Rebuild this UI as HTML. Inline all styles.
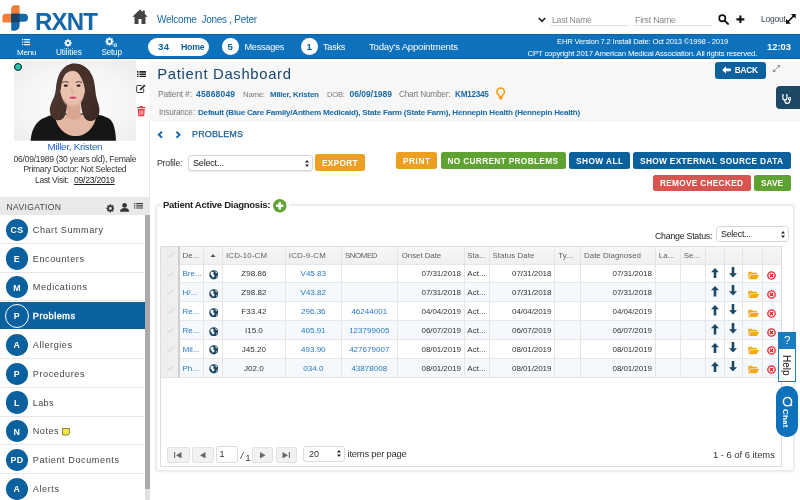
<!DOCTYPE html>
<html><head><meta charset="utf-8"><title>Patient Dashboard</title>
<style>
html,body{margin:0;padding:0;}
body{width:800px;height:500px;overflow:hidden;position:relative;background:#fff;will-change:transform;font-family:"Liberation Sans",sans-serif;}
.t{position:absolute;white-space:pre;line-height:1;}
.b{position:absolute;box-sizing:border-box;}
</style></head><body>
<div class="b" style="left:0.00px;top:34.20px;width:800.00px;height:25.00px;background:#0d71bc;border-top:1px solid #0c62a8;border-bottom:1px solid #0c62a8;"></div>
<div class="b" style="left:149.00px;top:61.50px;width:651.00px;height:59.00px;background:#f7f7f7;"></div>
<div class="b" style="left:149.00px;top:120.50px;width:1.00px;height:379.50px;background:#e6e6e6;"></div>
<div class="b" style="left:149.00px;top:120.20px;width:651.00px;height:0.80px;background:#f1f1f1;"></div>
<svg class="b" style="left:0.00px;top:0.00px;" width="32.00" height="34.00" viewBox="0 0 32 34">
<path d="M14.700 5.200h4.900v17.200h-15.700a1.500 1.500 0 0 1-1.500-1.500v-3.750a3.500 3.500 0 0 1 3.500-3.500h5.300v-4.950a3.500 3.500 0 0 1 3.500-3.500z" fill="#f57d36"/>
<path d="M11.200 13.650h12.800a4 4 0 0 1 4 4v0.200a4 4 0 0 1-4 4h-4.400v3.950a5 5 0 0 1-5 5h-2.400a1 1 0 0 1-1-1z" fill="#1467a8"/>
<rect x="11.200" y="13.650" width="8.400" height="8.750" fill="#15436b"/>
</svg>
<span class="t" style="left:35.00px;top:10.00px;font-size:24.00px;color:#1466aa;font-weight:700;letter-spacing:-0.843px;">RXNT</span>
<svg class="b" style="left:132.00px;top:9.00px;" width="16.00" height="15.50" viewBox="0 0 16 15.5"><path d="M8 0.500L0.300 7.700h2.200v7.300h4v-5h3v5h4v-7.300h2.200L12.800 5v-3.500h-2v1.600z" fill="#444"/></svg>
<span class="t" style="left:157.00px;top:15.00px;font-size:10.00px;color:#1a69a6;letter-spacing:-0.284px;">Welcome  Jones , Peter</span>
<svg class="b" style="left:537.50px;top:16.50px;" width="8.00" height="6.00" viewBox="0 0 8 6"><path d="M0.800 1l3.200 3.300L7.200 1" fill="none" stroke="#222" stroke-width="1.700"/></svg>
<span class="t" style="left:552.00px;top:16.00px;font-size:8.70px;color:#8a8a8a;letter-spacing:-0.258px;">Last Name</span>
<div class="b" style="left:550.00px;top:25.20px;width:79.00px;height:1.00px;background:#e4e4e4;"></div>
<span class="t" style="left:635.00px;top:16.00px;font-size:8.85px;color:#8a8a8a;letter-spacing:-0.252px;">First Name</span>
<div class="b" style="left:634.00px;top:25.20px;width:78.00px;height:1.00px;background:#e4e4e4;"></div>
<svg class="b" style="left:717.50px;top:14.00px;" width="11.00" height="10.50" viewBox="0 0 11 10.5"><circle cx="4.300" cy="4.300" r="3.100" fill="none" stroke="#111" stroke-width="1.700"/><path d="M6.600 6.600l3.400 3.300" stroke="#111" stroke-width="2" stroke-linecap="round"/></svg>
<svg class="b" style="left:736.30px;top:14.60px;" width="8.80" height="8.80" viewBox="0 0 10 10"><path d="M5 0.500v9M0.500 5h9" stroke="#111" stroke-width="2.400"/></svg>
<span class="t" style="left:761.00px;top:15.00px;font-size:8.55px;color:#414a5a;letter-spacing:-0.231px;">Logout</span>
<svg class="b" style="left:786.00px;top:14.30px;" width="9.70" height="9.70" viewBox="0 0 10 10"><path d="M5 0h5v5zM0 5v5h5z" fill="#111"/><path d="M8 2L2 8" stroke="#111" stroke-width="1.700"/></svg>
<svg class="b" style="left:22.00px;top:39.00px;" width="8.00" height="6.50" viewBox="0 0 8 6.500"><path d="M0 0.700h1.300M2.200 0.700h5.800M0 3.200h1.300M2.200 3.200h5.800M0 5.700h1.300M2.200 5.700h5.800" stroke="#fff" stroke-width="1.300"/></svg>
<span class="t" style="left:17.00px;top:49.00px;font-size:8.05px;color:#fff;letter-spacing:-0.211px;">Menu</span>
<svg class="b" style="left:64.00px;top:38.50px;" width="8.00" height="8.00" viewBox="0 0 16 16"><path d="M6.440 2.620L6.710 0.610L9.290 0.610L9.560 2.620L10.700 3.090L12.310 1.860L14.140 3.690L12.910 5.300L13.380 6.440L15.390 6.710L15.390 9.290L13.380 9.560L12.910 10.700L14.140 12.310L12.310 14.140L10.700 12.910L9.560 13.380L9.290 15.390L6.710 15.390L6.440 13.380L5.300 12.910L3.690 14.140L1.860 12.310L3.090 10.700L2.620 9.560L0.610 9.290L0.610 6.710L2.620 6.440L3.090 5.300L1.860 3.690L3.690 1.860L5.300 3.090ZM5.400 8a2.600 2.600 0 1 0 5.200 0a2.600 2.600 0 1 0 -5.200 0Z" fill="#fff" fill-rule="evenodd"/></svg>
<span class="t" style="left:56.00px;top:49.00px;font-size:8.20px;color:#fff;letter-spacing:-0.054px;">Utilities</span>
<svg class="b" style="left:105.00px;top:37.00px;" width="9.00" height="9.00" viewBox="0 0 16 16"><path d="M6.440 2.620L6.710 0.610L9.290 0.610L9.560 2.620L10.700 3.090L12.310 1.860L14.140 3.690L12.910 5.300L13.380 6.440L15.390 6.710L15.390 9.290L13.380 9.560L12.910 10.700L14.140 12.310L12.310 14.140L10.700 12.910L9.560 13.380L9.290 15.390L6.710 15.390L6.440 13.380L5.300 12.910L3.690 14.140L1.860 12.310L3.090 10.700L2.620 9.560L0.610 9.290L0.610 6.710L2.620 6.440L3.090 5.300L1.860 3.690L3.690 1.860L5.300 3.090ZM5.400 8a2.600 2.600 0 1 0 5.200 0a2.600 2.600 0 1 0 -5.200 0Z" fill="#fff" fill-rule="evenodd"/></svg>
<svg class="b" style="left:112.50px;top:42.50px;" width="4.50" height="4.50" viewBox="0 0 16 16"><path d="M6.440 2.620L6.710 0.610L9.290 0.610L9.560 2.620L10.700 3.090L12.310 1.860L14.140 3.690L12.910 5.300L13.380 6.440L15.390 6.710L15.390 9.290L13.380 9.560L12.910 10.700L14.140 12.310L12.310 14.140L10.700 12.910L9.560 13.380L9.290 15.390L6.710 15.390L6.440 13.380L5.300 12.910L3.690 14.140L1.860 12.310L3.090 10.700L2.620 9.560L0.610 9.290L0.610 6.710L2.620 6.440L3.090 5.300L1.860 3.690L3.690 1.860L5.300 3.090ZM5.400 8a2.600 2.600 0 1 0 5.200 0a2.600 2.600 0 1 0 -5.200 0Z" fill="#cfe2f3" fill-rule="evenodd"/></svg>
<span class="t" style="left:101.50px;top:49.00px;font-size:8.20px;color:#fff;letter-spacing:-0.232px;">Setup</span>
<div class="b" style="left:147.50px;top:37.50px;width:61.50px;height:18.00px;background:#fff;border-radius:9px;"></div>
<span class="t" style="left:158.00px;top:42.00px;font-size:9.60px;color:#0b609e;font-weight:700;letter-spacing:0.325px;">34</span>
<span class="t" style="left:181.00px;top:43.00px;font-size:8.70px;color:#0b609e;font-weight:700;letter-spacing:-0.223px;">Home</span>
<div class="b" style="left:222.00px;top:38.00px;width:16.50px;height:16.50px;background:#fff;border-radius:50%;"></div>
<span class="t" style="left:227.53px;top:42.00px;font-size:9.60px;color:#0b609e;font-weight:700;">5</span>
<span class="t" style="left:244.50px;top:43.00px;font-size:9.15px;color:#fff;letter-spacing:-0.244px;">Messages</span>
<div class="b" style="left:301.00px;top:38.00px;width:16.50px;height:16.50px;background:#fff;border-radius:50%;"></div>
<span class="t" style="left:306.53px;top:42.00px;font-size:9.60px;color:#0b609e;font-weight:700;">1</span>
<span class="t" style="left:323.00px;top:43.00px;font-size:9.20px;color:#fff;letter-spacing:-0.254px;">Tasks</span>
<span class="t" style="left:369.00px;top:42.00px;font-size:9.60px;color:#fff;letter-spacing:-0.215px;">Today's Appointments</span>
<span class="t" style="left:557.00px;top:38.00px;font-size:7.70px;color:#fff;letter-spacing:-0.210px;">EHR Version 7.2 Install Date: Oct 2013 ©1998 - 2019</span>
<span class="t" style="left:527.50px;top:50.00px;font-size:7.80px;color:#fff;letter-spacing:-0.186px;">CPT copyright 2017 American Medical Association. All rights reserved.</span>
<span class="t" style="left:767.00px;top:42.00px;font-size:9.40px;color:#fff;font-weight:700;letter-spacing:-0.011px;">12:03</span>
<span class="t" style="left:157.30px;top:67.00px;font-size:14.80px;color:#17456f;letter-spacing:0.694px;">Patient Dashboard</span>
<span class="t" style="left:158.00px;top:90.00px;font-size:8.50px;color:#7a7a7a;letter-spacing:-0.213px;">Patient #:</span>
<span class="t" style="left:196.00px;top:90.00px;font-size:8.50px;color:#1a69a6;font-weight:700;letter-spacing:0.169px;">45868049</span>
<span class="t" style="left:243.00px;top:91.00px;font-size:7.75px;color:#7a7a7a;letter-spacing:-0.206px;">Name:</span>
<span class="t" style="left:270.00px;top:91.00px;font-size:7.95px;color:#1a69a6;font-weight:700;letter-spacing:-0.224px;">Miller, Kristen</span>
<span class="t" style="left:327.00px;top:91.00px;font-size:7.60px;color:#7a7a7a;letter-spacing:-0.194px;">DOB:</span>
<span class="t" style="left:349.50px;top:90.00px;font-size:8.50px;color:#1a69a6;font-weight:700;">06/09/1989</span>
<span class="t" style="left:399.00px;top:90.00px;font-size:8.30px;color:#7a7a7a;letter-spacing:-0.244px;">Chart Number:</span>
<span class="t" style="left:455.00px;top:91.00px;font-size:8.15px;color:#1a69a6;font-weight:700;letter-spacing:-0.223px;">KM12345</span>
<svg class="b" style="left:496.00px;top:87.20px;" width="9.40" height="12.70" viewBox="0 0 9.400 12.700"><path d="M4.700 0.900a3.800 3.800 0 0 0-2.300 6.800c0.500 0.500 0.800 1.100 0.900 1.800h2.800c0.100-0.700 0.400-1.300 0.900-1.800a3.800 3.800 0 0 0-2.300-6.800z" fill="none" stroke="#fb9b14" stroke-width="1.500"/><path d="M3.100 9.300h3.200v1.900a1.200 1.200 0 0 1-1.200 1.200h-0.800a1.200 1.200 0 0 1-1.200-1.200z" fill="#fb9b14"/></svg>
<span class="t" style="left:159.00px;top:109.00px;font-size:8.15px;color:#7a7a7a;letter-spacing:-0.228px;">Insurance:</span>
<span class="t" style="left:198.00px;top:109.00px;font-size:8.10px;color:#1a69a6;font-weight:700;letter-spacing:-0.232px;">Default (Blue Care Family/Anthem Medicaid), State Farm (State Farm), Hennepin Health (Hennepin Health)</span>
<div class="b" style="left:715.00px;top:62.00px;width:50.60px;height:16.80px;background:#0b609e;border-radius:3px;"></div>
<svg class="b" style="left:722.00px;top:66.40px;" width="9.00" height="7.80" viewBox="0 0 9 8"><path d="M0 4l4-3.800v2.400h5v2.800h-5v2.400z" fill="#fff"/></svg>
<span class="t" style="left:734.80px;top:66.00px;font-size:8.30px;color:#fff;font-weight:700;letter-spacing:-0.226px;">BACK</span>
<svg class="b" style="left:773.00px;top:64.50px;" width="7.00" height="7.00" viewBox="0 0 7 7"><path d="M4 0h3v3zM3 7h-3v-3z" fill="#8e8e8e"/><path d="M6 1l-5 5" stroke="#8e8e8e" stroke-width="1"/></svg>
<div class="b" style="left:776.00px;top:86.00px;width:28.00px;height:23.00px;background:#1c4865;border-radius:4px;"></div>
<svg class="b" style="left:781.70px;top:93.60px;" width="9.60" height="10.20" viewBox="0 0 12 13"><path d="M2.200 1.200h-1.200v3.800a2.600 2.600 0 0 0 5.200 0v-3.800h-1.200" fill="none" stroke="#fff" stroke-width="1.500"/><path d="M3.600 7.600v1.400a3 3 0 0 0 6 0v-1.600" fill="none" stroke="#fff" stroke-width="1.500"/><circle cx="9.600" cy="6" r="1.500" fill="none" stroke="#fff" stroke-width="1.400"/></svg>
<svg class="b" style="left:136.80px;top:70.80px;" width="9.50" height="6.50" viewBox="0 0 9.500 6.500"><path d="M0 0.900h1.500M2.400 0.900h7.100M0 3.250h1.500M2.400 3.250h7.100M0 5.600h1.500M2.400 5.600h7.100" stroke="#222" stroke-width="1.600"/></svg>
<svg class="b" style="left:136.30px;top:84.20px;" width="10.00" height="9.00" viewBox="0 0 10 9"><path d="M5.500 1.500h-4a0.800 0.800 0 0 0-0.800 0.800v5.400a0.800 0.800 0 0 0 0.800 0.800h5.400a0.800 0.800 0 0 0 0.800-0.800v-3" fill="none" stroke="#333" stroke-width="1"/><path d="M3.500 6.500l0.400-1.800 4.300-4.300 1.400 1.400-4.300 4.300z" fill="#333"/></svg>
<svg class="b" style="left:137.20px;top:106.40px;" width="8.50" height="10.30" viewBox="0 0 8.500 10.500"><path d="M3 0h2.500l0.400 1h2.600v1.300h-8.500v-1.300h2.600zM0.700 3h7.100l-0.500 7a0.600 0.600 0 0 1-0.600 0.500h-4.900a0.600 0.600 0 0 1-0.600-0.500z" fill="#fa3341"/><path d="M2.700 4.500v4.500M4.250 4.500v4.500M5.800 4.500v4.500" stroke="#fff" stroke-width="0.700"/></svg>
<span class="t" style="left:47.50px;top:142.00px;font-size:9.85px;color:#1d5fd0;letter-spacing:-0.287px;">Miller, Kristen</span>
<span class="t" style="left:13.50px;top:155.00px;font-size:8.55px;color:#333;letter-spacing:-0.241px;">06/09/1989 (30 years old), Female</span>
<span class="t" style="left:23.40px;top:165.00px;font-size:8.50px;color:#333;letter-spacing:-0.254px;">Primary Doctor: Not Selected</span>
<span class="t" style="left:35.00px;top:176.00px;font-size:8.45px;color:#333;letter-spacing:-0.248px;">Last Visit:</span>
<span class="t" style="left:74.00px;top:176.00px;font-size:8.65px;color:#222;letter-spacing:-0.255px;text-decoration:underline;">09/23/2019</span>
<div class="b" style="left:0.00px;top:197.40px;width:149.50px;height:18.00px;background:#e9e9e9;"></div>
<span class="t" style="left:6.60px;top:203.00px;font-size:8.60px;color:#444;letter-spacing:0.293px;">NAVIGATION</span>
<svg class="b" style="left:105.50px;top:203.90px;" width="8.80" height="8.80" viewBox="0 0 16 16"><path d="M6.440 2.620L6.710 0.610L9.290 0.610L9.560 2.620L10.700 3.090L12.310 1.860L14.140 3.690L12.910 5.300L13.380 6.440L15.390 6.710L15.390 9.290L13.380 9.560L12.910 10.700L14.140 12.310L12.310 14.140L10.700 12.910L9.560 13.380L9.290 15.390L6.710 15.390L6.440 13.380L5.300 12.910L3.690 14.140L1.860 12.310L3.090 10.700L2.620 9.560L0.610 9.290L0.610 6.710L2.620 6.440L3.090 5.300L1.860 3.690L3.690 1.860L5.300 3.090ZM5.400 8a2.600 2.600 0 1 0 5.200 0a2.600 2.600 0 1 0 -5.200 0Z" fill="#333" fill-rule="evenodd"/></svg>
<svg class="b" style="left:119.80px;top:203.20px;" width="9.20" height="8.70" viewBox="0 0 9 8.500"><circle cx="4.500" cy="2.400" r="2.300" fill="#333"/><path d="M0 8.500c0-2.500 1.800-3.600 4.500-3.600s4.500 1.100 4.500 3.600z" fill="#333"/></svg>
<svg class="b" style="left:134.20px;top:203.40px;" width="9.00" height="6.00" viewBox="0 0 9 6"><path d="M0 0.600h1.300M2.200 0.600h6.800M0 2.800h1.300M2.200 2.800h6.800M0 5h1.300M2.200 5h6.800" stroke="#3a3a3a" stroke-width="1.150"/></svg>
<div class="b" style="left:145.20px;top:215.40px;width:4.40px;height:273.60px;background:#ababab;"></div>
<div class="b" style="left:145.20px;top:489.00px;width:4.40px;height:11.00px;background:#e0e0e0;"></div>
<div class="b" style="left:0.00px;top:242.75px;width:144.00px;height:1.00px;background:#e6e6e6;"></div>
<div class="b" style="left:5.50px;top:218.65px;width:22.60px;height:22.20px;background:#0b609e;border-radius:50%;"></div>
<span class="t" style="left:10.69px;top:226.00px;font-size:8.80px;color:#fff;font-weight:700;letter-spacing:0.600px;margin-left:-0.3px;">CS</span>
<span class="t" style="left:32.80px;top:226.00px;font-size:9.10px;color:#444;letter-spacing:0.540px;">Chart Summary</span>
<div class="b" style="left:0.00px;top:271.55px;width:144.00px;height:1.00px;background:#e6e6e6;"></div>
<div class="b" style="left:5.50px;top:247.45px;width:22.60px;height:22.20px;background:#0b609e;border-radius:50%;"></div>
<span class="t" style="left:13.87px;top:255.00px;font-size:8.80px;color:#fff;font-weight:700;letter-spacing:0.600px;margin-left:-0.0px;">E</span>
<span class="t" style="left:32.80px;top:255.00px;font-size:9.10px;color:#444;letter-spacing:0.574px;">Encounters</span>
<div class="b" style="left:0.00px;top:300.35px;width:144.00px;height:1.00px;background:#e6e6e6;"></div>
<div class="b" style="left:5.50px;top:276.25px;width:22.60px;height:22.20px;background:#0b609e;border-radius:50%;"></div>
<span class="t" style="left:13.13px;top:284.00px;font-size:8.80px;color:#fff;font-weight:700;letter-spacing:0.600px;margin-left:-0.0px;">M</span>
<span class="t" style="left:32.80px;top:283.00px;font-size:9.10px;color:#444;letter-spacing:0.564px;">Medications</span>
<div class="b" style="left:0.00px;top:301.65px;width:145.20px;height:27.70px;background:#0b609e;"></div>
<div class="b" style="left:4.80px;top:304.15px;width:24.00px;height:24.00px;background:transparent;border-radius:50%;border:1.600px solid #fff;"></div>
<span class="t" style="left:13.87px;top:312.00px;font-size:8.80px;color:#fff;font-weight:700;letter-spacing:0.600px;margin-left:-0.0px;">P</span>
<span class="t" style="left:32.80px;top:312.00px;font-size:9.10px;color:#fff;letter-spacing:0.537px;-webkit-text-stroke:0.400px #fff;">Problems</span>
<div class="b" style="left:0.00px;top:357.95px;width:144.00px;height:1.00px;background:#e6e6e6;"></div>
<div class="b" style="left:5.50px;top:333.85px;width:22.60px;height:22.20px;background:#0b609e;border-radius:50%;"></div>
<span class="t" style="left:13.62px;top:341.00px;font-size:8.80px;color:#fff;font-weight:700;letter-spacing:0.600px;margin-left:-0.0px;">A</span>
<span class="t" style="left:32.80px;top:341.00px;font-size:9.10px;color:#444;letter-spacing:0.538px;">Allergies</span>
<div class="b" style="left:0.00px;top:386.75px;width:144.00px;height:1.00px;background:#e6e6e6;"></div>
<div class="b" style="left:5.50px;top:362.65px;width:22.60px;height:22.20px;background:#0b609e;border-radius:50%;"></div>
<span class="t" style="left:13.87px;top:370.00px;font-size:8.80px;color:#fff;font-weight:700;letter-spacing:0.600px;margin-left:-0.0px;">P</span>
<span class="t" style="left:32.80px;top:370.00px;font-size:9.10px;color:#444;letter-spacing:0.574px;">Procedures</span>
<div class="b" style="left:0.00px;top:415.55px;width:144.00px;height:1.00px;background:#e6e6e6;"></div>
<div class="b" style="left:5.50px;top:391.45px;width:22.60px;height:22.20px;background:#0b609e;border-radius:50%;"></div>
<span class="t" style="left:14.11px;top:399.00px;font-size:8.80px;color:#fff;font-weight:700;letter-spacing:0.600px;margin-left:-0.0px;">L</span>
<span class="t" style="left:32.80px;top:399.00px;font-size:9.10px;color:#444;letter-spacing:0.324px;">Labs</span>
<div class="b" style="left:0.00px;top:444.35px;width:144.00px;height:1.00px;background:#e6e6e6;"></div>
<div class="b" style="left:5.50px;top:420.25px;width:22.60px;height:22.20px;background:#0b609e;border-radius:50%;"></div>
<span class="t" style="left:13.62px;top:428.00px;font-size:8.80px;color:#fff;font-weight:700;letter-spacing:0.600px;margin-left:-0.0px;">N</span>
<span class="t" style="left:32.80px;top:427.00px;font-size:9.10px;color:#444;letter-spacing:0.483px;">Notes</span>
<div class="b" style="left:0.00px;top:473.15px;width:144.00px;height:1.00px;background:#e6e6e6;"></div>
<div class="b" style="left:5.50px;top:449.05px;width:22.60px;height:22.20px;background:#0b609e;border-radius:50%;"></div>
<span class="t" style="left:10.69px;top:456.00px;font-size:8.80px;color:#fff;font-weight:700;letter-spacing:0.600px;margin-left:-0.3px;">PD</span>
<span class="t" style="left:32.80px;top:456.00px;font-size:9.10px;color:#444;letter-spacing:0.582px;">Patient Documents</span>
<div class="b" style="left:0.00px;top:501.95px;width:144.00px;height:1.00px;background:#e6e6e6;"></div>
<div class="b" style="left:5.50px;top:477.85px;width:22.60px;height:22.20px;background:#0b609e;border-radius:50%;"></div>
<span class="t" style="left:13.62px;top:485.00px;font-size:8.80px;color:#fff;font-weight:700;letter-spacing:0.600px;margin-left:-0.0px;">A</span>
<span class="t" style="left:32.80px;top:485.00px;font-size:9.10px;color:#444;letter-spacing:0.588px;">Alerts</span>
<svg class="b" style="left:62.40px;top:428.00px;" width="8.10" height="7.50" viewBox="0 0 8 7.500"><path d="M0.500 0.500h7v5l-1.500 1.500h-5.500z" fill="#f3e645" stroke="#6b6b2a" stroke-width="0.800"/></svg>
<svg class="b" style="left:13.70px;top:59.50px;" width="122.00" height="81.10" viewBox="22 10 718 473">
<defs>
<radialGradient id="pbg" cx="0.5" cy="0.55" r="0.75"><stop offset="0" stop-color="#fcfcfc"/><stop offset="0.6" stop-color="#f5f5f5"/><stop offset="1" stop-color="#eaeaea"/></radialGradient>
<linearGradient id="hair" x1="0" y1="0" x2="1" y2="1"><stop offset="0" stop-color="#5a4238"/><stop offset="0.5" stop-color="#46322b"/><stop offset="1" stop-color="#3a2923"/></linearGradient>
<clipPath id="hclip"><path d="M375 28C335 30 298 60 282 110C268 150 272 190 258 225L336 250L414 250L506 222C498 180 500 140 482 100C462 55 420 28 375 28Z"/></clipPath>
<filter id="soft" x="-5%" y="-5%" width="110%" height="110%"><feGaussianBlur stdDeviation="2.500"/></filter>
</defs>
<rect x="22" y="10" width="718" height="473" fill="url(#pbg)"/>
<g filter="url(#soft)">
<path d="M120 483C124 430 140 385 185 355C215 338 250 328 290 322L480 322C520 328 560 338 585 355C612 378 620 430 622 483Z" fill="#131313"/>
<path d="M262 328C268 400 320 455 385 455C450 455 500 400 508 328Z" fill="#e3b7a2"/>
<path d="M332 250h82v95c-20 18-62 18-82 0z" fill="#d9a690"/>
<path d="M375 28C335 30 298 60 282 110C268 150 272 190 258 225C240 262 226 290 236 325C246 355 280 372 305 356C325 342 332 310 336 250L414 250C420 320 432 350 455 364C485 376 518 352 524 318C530 282 512 255 506 222C498 180 500 140 482 100C462 55 420 28 375 28Z" fill="url(#hair)"/>
<ellipse cx="367" cy="174" rx="73" ry="102" fill="#eac3b0"/>
<g clip-path="url(#hclip)"><path d="M353 52C322 78 302 122 297 185L270 190L270 20L353 20Z" fill="#4a362e"/>
<path d="M353 52C400 66 430 118 441 190L470 195L470 20L353 20Z" fill="#46322b"/></g>
<path d="M300 215q66 80 134 0q-10 70-67 72q-55-2-67-72z" fill="#e2b5a1" opacity="0.6"/>
<ellipse cx="327" cy="159" rx="12" ry="6.500" fill="#2e211d"/>
<ellipse cx="402" cy="159" rx="12" ry="6.500" fill="#2e211d"/>
<path d="M306 140q20-10 38 0M384 140q20-10 38 0" stroke="#4a352d" stroke-width="5.500" fill="none"/>
<path d="M364 170q-4 22 0 30h12" stroke="#c99482" stroke-width="4" fill="none"/>
<path d="M345 228q24-10 48 0q-24 18-48 0z" fill="#d4466e"/>
</g>
</svg>
<div class="b" style="left:14.10px;top:62.70px;width:8.00px;height:8.00px;background:#27c4ae;border-radius:50%;border:1.500px solid #10191a;box-shadow:0 0 0 0.800px rgba(255,255,255,0.85);"></div>
<svg class="b" style="left:157.00px;top:130.50px;" width="6.50" height="7.50" viewBox="0 0 6.500 7.500"><path d="M5 0.800L1.800 3.750L5 6.700" fill="none" stroke="#1466aa" stroke-width="1.900"/></svg>
<svg class="b" style="left:174.50px;top:130.50px;" width="6.50" height="7.50" viewBox="0 0 6.500 7.500"><path d="M1.500 0.800L4.700 3.750L1.500 6.700" fill="none" stroke="#1466aa" stroke-width="1.900"/></svg>
<span class="t" style="left:192.00px;top:130.00px;font-size:9.00px;color:#1a5f96;letter-spacing:0.141px;-webkit-text-stroke:0.250px #1a5f96;">PROBLEMS</span>
<span class="t" style="left:157.00px;top:159.00px;font-size:8.75px;color:#333;letter-spacing:-0.247px;">Profile:</span>
<div class="b" style="left:187.50px;top:154.50px;width:125.00px;height:16.50px;background:#fff;border:1px solid #d4d4d4;border-radius:3.500px;box-shadow:0 0.5px 1px rgba(0,0,0,0.08);"></div>
<span class="t" style="left:193.00px;top:159.00px;font-size:9.15px;color:#222;letter-spacing:-0.257px;">Select...</span>
<svg class="b" style="left:305.00px;top:159.50px;" width="4.00" height="7.00" viewBox="0 0 4 7"><path d="M0 2.600L2 0L4 2.600zM0 4.400L2 7L4 4.400z" fill="#222"/></svg>
<div class="b" style="left:315.00px;top:154.00px;width:50.00px;height:17.00px;background:#ec9f20;border-radius:2.500px;"></div>
<span class="t" style="left:322.00px;top:159.00px;font-size:8.30px;color:#fff;font-weight:700;letter-spacing:0.274px;">EXPORT</span>
<div class="b" style="left:396.00px;top:152.00px;width:41.00px;height:16.50px;background:#ec9f20;border-radius:2.500px;"></div>
<span class="t" style="left:403.00px;top:157.00px;font-size:8.30px;color:#fff;font-weight:700;letter-spacing:0.525px;">PRINT</span>
<div class="b" style="left:440.50px;top:152.00px;width:125.00px;height:16.50px;background:#5ea331;border-radius:2.500px;"></div>
<span class="t" style="left:447.50px;top:157.00px;font-size:8.30px;color:#fff;font-weight:700;letter-spacing:0.324px;">NO CURRENT PROBLEMS</span>
<div class="b" style="left:569.00px;top:152.00px;width:61.00px;height:16.50px;background:#0b609e;border-radius:2.500px;"></div>
<span class="t" style="left:576.00px;top:157.00px;font-size:8.30px;color:#fff;font-weight:700;letter-spacing:0.436px;">SHOW ALL</span>
<div class="b" style="left:633.00px;top:152.00px;width:157.50px;height:16.50px;background:#0b609e;border-radius:2.500px;"></div>
<span class="t" style="left:640.00px;top:157.00px;font-size:8.30px;color:#fff;font-weight:700;letter-spacing:0.348px;">SHOW EXTERNAL SOURCE DATA</span>
<div class="b" style="left:653.00px;top:174.50px;width:97.50px;height:16.50px;background:#d9534f;border-radius:2.500px;"></div>
<span class="t" style="left:660.00px;top:179.00px;font-size:8.30px;color:#fff;font-weight:700;letter-spacing:0.283px;">REMOVE CHECKED</span>
<div class="b" style="left:754.00px;top:174.50px;width:36.50px;height:16.50px;background:#5ea331;border-radius:2.500px;"></div>
<span class="t" style="left:761.00px;top:179.00px;font-size:8.30px;color:#fff;font-weight:700;">SAVE</span>
<div class="b" style="left:156.00px;top:204.50px;width:637.50px;height:266.00px;background:#fff;border:1px solid #e9e9e9;border-radius:2px;box-shadow:0 0 3px rgba(0,0,0,0.16);"></div>
<div class="b" style="left:160.00px;top:198.00px;width:129.00px;height:16.00px;background:#fff;"></div>
<span class="t" style="left:163.00px;top:200.00px;font-size:9.55px;color:#222;font-weight:700;letter-spacing:-0.282px;">Patient Active Diagnosis:</span>
<svg class="b" style="left:273.00px;top:199.00px;" width="13.50" height="13.50" viewBox="0 0 13.500 13.500"><circle cx="6.750" cy="6.750" r="6.750" fill="#5ea331"/><path d="M6.750 3v7.500M3 6.750h7.500" stroke="#fff" stroke-width="2.400"/></svg>
<span class="t" style="left:655.00px;top:232.00px;font-size:8.80px;color:#222;letter-spacing:-0.244px;">Change Status:</span>
<div class="b" style="left:715.50px;top:226.00px;width:73.50px;height:15.50px;background:#fff;border:1px solid #d4d4d4;border-radius:3.500px;"></div>
<span class="t" style="left:721.00px;top:230.00px;font-size:8.85px;color:#222;letter-spacing:-0.247px;">Select...</span>
<svg class="b" style="left:781.00px;top:230.50px;" width="4.00" height="7.00" viewBox="0 0 4 7"><path d="M0 2.600L2 0L4 2.600zM0 4.400L2 7L4 4.400z" fill="#222"/></svg>
<div class="b" style="left:159.80px;top:246.00px;width:622.50px;height:220.50px;background:#fff;border:1px solid #dcdcdc;"></div>
<div class="b" style="left:160.80px;top:247.00px;width:620.50px;height:17.00px;background:linear-gradient(#f7f7f7,#f0f0f0);"></div>
<div class="b" style="left:160.80px;top:263.50px;width:620.50px;height:1.00px;background:#e7e7e7;"></div>
<div class="b" style="left:160.80px;top:282.85px;width:620.50px;height:18.85px;background:#f5f8fc;"></div>
<div class="b" style="left:160.80px;top:282.35px;width:620.50px;height:1.00px;background:#e7e7e7;"></div>
<div class="b" style="left:160.80px;top:301.20px;width:620.50px;height:1.00px;background:#e7e7e7;"></div>
<div class="b" style="left:160.80px;top:320.55px;width:620.50px;height:18.85px;background:#f5f8fc;"></div>
<div class="b" style="left:160.80px;top:320.05px;width:620.50px;height:1.00px;background:#e7e7e7;"></div>
<div class="b" style="left:160.80px;top:338.90px;width:620.50px;height:1.00px;background:#e7e7e7;"></div>
<div class="b" style="left:160.80px;top:358.25px;width:620.50px;height:18.85px;background:#f5f8fc;"></div>
<div class="b" style="left:160.80px;top:357.75px;width:620.50px;height:1.00px;background:#e7e7e7;"></div>
<div class="b" style="left:160.80px;top:376.60px;width:620.50px;height:1.00px;background:#e4e4e4;"></div>
<div class="b" style="left:160.80px;top:247.00px;width:17.70px;height:130.10px;background:#efefef;"></div>
<div class="b" style="left:178.10px;top:247.00px;width:1.80px;height:130.10px;background:#d0d0d0;"></div>
<div class="b" style="left:203.25px;top:247.00px;width:1.00px;height:130.10px;background:#e5e5e5;"></div>
<div class="b" style="left:222.00px;top:247.00px;width:1.00px;height:130.10px;background:#e5e5e5;"></div>
<div class="b" style="left:284.50px;top:247.00px;width:1.00px;height:130.10px;background:#e5e5e5;"></div>
<div class="b" style="left:340.50px;top:247.00px;width:1.00px;height:130.10px;background:#e5e5e5;"></div>
<div class="b" style="left:397.00px;top:247.00px;width:1.00px;height:130.10px;background:#e5e5e5;"></div>
<div class="b" style="left:463.50px;top:247.00px;width:1.00px;height:130.10px;background:#e5e5e5;"></div>
<div class="b" style="left:488.50px;top:247.00px;width:1.00px;height:130.10px;background:#e5e5e5;"></div>
<div class="b" style="left:554.00px;top:247.00px;width:1.00px;height:130.10px;background:#e5e5e5;"></div>
<div class="b" style="left:580.00px;top:247.00px;width:1.00px;height:130.10px;background:#e5e5e5;"></div>
<div class="b" style="left:655.00px;top:247.00px;width:1.00px;height:130.10px;background:#e5e5e5;"></div>
<div class="b" style="left:680.00px;top:247.00px;width:1.00px;height:130.10px;background:#e5e5e5;"></div>
<div class="b" style="left:705.00px;top:247.00px;width:1.00px;height:130.10px;background:#e5e5e5;"></div>
<div class="b" style="left:723.50px;top:247.00px;width:1.00px;height:130.10px;background:#e5e5e5;"></div>
<div class="b" style="left:742.00px;top:247.00px;width:1.00px;height:130.10px;background:#e5e5e5;"></div>
<div class="b" style="left:761.50px;top:247.00px;width:1.00px;height:130.10px;background:#e5e5e5;"></div>
<span class="t" style="left:182.50px;top:252.00px;font-size:7.90px;color:#5e5e5e;">De</span>
<span class="t" style="left:192.70px;top:252.00px;font-size:7.90px;color:#5e5e5e;">...</span>
<svg class="b" style="left:209.50px;top:253.50px;" width="6.00" height="3.50" viewBox="0 0 6 3.500"><path d="M0 3.500L3 0L6 3.500z" fill="#555"/></svg>
<span class="t" style="left:226.00px;top:252.00px;font-size:7.90px;color:#5e5e5e;letter-spacing:0.132px;">ICD-10-CM</span>
<span class="t" style="left:288.80px;top:252.00px;font-size:7.90px;color:#5e5e5e;letter-spacing:0.207px;">ICD-9-CM</span>
<span class="t" style="left:345.00px;top:252.00px;font-size:7.90px;color:#5e5e5e;letter-spacing:-0.435px;">SNOMED</span>
<span class="t" style="left:401.70px;top:252.00px;font-size:7.90px;color:#5e5e5e;letter-spacing:-0.040px;">Onset Date</span>
<span class="t" style="left:467.30px;top:252.00px;font-size:7.90px;color:#5e5e5e;">Sta</span>
<span class="t" style="left:479.26px;top:252.00px;font-size:7.90px;color:#5e5e5e;">...</span>
<span class="t" style="left:492.50px;top:252.00px;font-size:7.90px;color:#5e5e5e;letter-spacing:0.072px;">Status Date</span>
<span class="t" style="left:558.30px;top:252.00px;font-size:7.90px;color:#5e5e5e;">Ty</span>
<span class="t" style="left:566.74px;top:252.00px;font-size:7.90px;color:#5e5e5e;">...</span>
<span class="t" style="left:584.00px;top:252.00px;font-size:7.90px;color:#5e5e5e;letter-spacing:0.027px;">Date Diagnosed</span>
<span class="t" style="left:658.80px;top:252.00px;font-size:7.90px;color:#5e5e5e;">La</span>
<span class="t" style="left:667.69px;top:252.00px;font-size:7.90px;color:#5e5e5e;">...</span>
<span class="t" style="left:683.80px;top:252.00px;font-size:7.90px;color:#5e5e5e;">Se</span>
<span class="t" style="left:693.56px;top:252.00px;font-size:7.90px;color:#5e5e5e;">...</span>
<svg class="b" style="left:167.00px;top:252.00px;" width="7.00" height="6.50" viewBox="0 0 7 6.500"><path d="M0.500 3.200l2 2L6.500 0.800" fill="none" stroke="#dcdcdc" stroke-width="1.300"/></svg>
<svg class="b" style="left:167.00px;top:270.50px;" width="7.00" height="6.50" viewBox="0 0 7 6.500"><path d="M0.500 3.200l2 2L6.500 0.800" fill="none" stroke="#dcdcdc" stroke-width="1.300"/></svg>
<span class="t" style="left:182.50px;top:270.00px;font-size:8.05px;color:#2a7bc4;">Bre</span>
<span class="t" style="left:195.13px;top:270.00px;font-size:8.05px;color:#2a7bc4;">...</span>
<svg class="b" style="left:208.70px;top:270.00px;" width="9.60" height="9.60" viewBox="0 0 10 10"><circle cx="5" cy="5" r="4.800" fill="#1c4865"/><path d="M2.200 2.200c1-0.600 2.200-0.300 2.600 0.400c0.300 0.700-0.500 1.200-0.300 1.900c0.200 0.700 1.300 0.800 1.200 1.700c-0.100 0.900-1 1.600-1.700 1.500c-0.600-0.100-0.400-1-0.900-1.500c-0.500-0.500-1.300-0.600-1.500-1.400c-0.200-0.800 0.100-1.800 0.600-2.600zM6.500 1.300c0.900 0.300 1.700 0.900 2.200 1.800c-0.600 0.300-1.400 0.200-1.800-0.400c-0.300-0.500-0.500-0.900-0.400-1.400zM8.800 5.800c0.200 0.600-0.200 1.600-0.800 2.200c-0.400-0.400-0.400-1.100-0.100-1.600c0.200-0.400 0.600-0.600 0.900-0.600z" fill="#fff"/></svg>
<span class="t" style="left:241.37px;top:270.00px;font-size:8.05px;color:#333;">Z98.86</span>
<span class="t" style="left:300.54px;top:270.00px;font-size:8.05px;color:#2a7bc4;">V45.83</span>
<span class="t" style="left:421.50px;top:270.00px;font-size:8.05px;color:#333;letter-spacing:-0.088px;">07/31/2018</span>
<span class="t" style="left:467.30px;top:270.00px;font-size:8.05px;color:#333;">Act</span>
<span class="t" style="left:479.03px;top:270.00px;font-size:8.05px;color:#333;">...</span>
<span class="t" style="left:512.00px;top:270.00px;font-size:8.05px;color:#333;letter-spacing:-0.088px;">07/31/2018</span>
<span class="t" style="left:612.50px;top:270.00px;font-size:8.05px;color:#333;letter-spacing:-0.088px;">07/31/2018</span>
<svg class="b" style="left:711.00px;top:267.50px;" width="8.00" height="10.50" viewBox="0 0 8 10.500"><path d="M4 0L0 4.300h2.700v6.200h2.600v-6.200h2.700z" fill="#1c4865"/></svg>
<svg class="b" style="left:729.00px;top:266.50px;" width="8.00" height="10.50" viewBox="0 0 8 10.500"><path d="M4 10.500L0 6.200h2.700v-6.200h2.600v6.200h2.700z" fill="#1c4865"/></svg>
<svg class="b" style="left:747.50px;top:271.00px;" width="11.50" height="8.50" viewBox="0 0 11.500 8.500"><path d="M0.300 7.800v-6.600a0.500 0.500 0 0 1 0.500-0.500h2.700l1 1.100h4a0.500 0.500 0 0 1 0.500 0.500v0.900h-6.300a0.800 0.800 0 0 0-0.700 0.500z" fill="#f2a91e"/><path d="M0.600 8.300l2.100-4.300a0.500 0.500 0 0 1 0.500-0.300h8l-2.200 4.300a0.500 0.500 0 0 1-0.500 0.300z" fill="#f2a91e"/></svg>
<svg class="b" style="left:767.00px;top:271.00px;" width="9.00" height="9.00" viewBox="0 0 9 9"><circle cx="4.500" cy="4.500" r="3.700" fill="none" stroke="#e8232c" stroke-width="1.300"/><path d="M3 3l3 3M6 3l-3 3" stroke="#e8232c" stroke-width="1.500"/></svg>
<svg class="b" style="left:167.00px;top:289.35px;" width="7.00" height="6.50" viewBox="0 0 7 6.500"><path d="M0.500 3.200l2 2L6.500 0.800" fill="none" stroke="#dcdcdc" stroke-width="1.300"/></svg>
<span class="t" style="left:182.50px;top:289.00px;font-size:8.05px;color:#2a7bc4;">H/</span>
<span class="t" style="left:190.65px;top:289.00px;font-size:8.05px;color:#2a7bc4;">...</span>
<svg class="b" style="left:208.70px;top:288.85px;" width="9.60" height="9.60" viewBox="0 0 10 10"><circle cx="5" cy="5" r="4.800" fill="#1c4865"/><path d="M2.200 2.200c1-0.600 2.200-0.300 2.600 0.400c0.300 0.700-0.500 1.200-0.300 1.900c0.200 0.700 1.300 0.800 1.200 1.700c-0.100 0.900-1 1.600-1.700 1.500c-0.600-0.100-0.400-1-0.900-1.500c-0.500-0.500-1.300-0.600-1.500-1.400c-0.200-0.800 0.100-1.800 0.600-2.600zM6.500 1.300c0.900 0.300 1.700 0.900 2.200 1.800c-0.600 0.300-1.400 0.200-1.800-0.400c-0.300-0.500-0.500-0.900-0.400-1.400zM8.800 5.800c0.200 0.600-0.200 1.600-0.800 2.200c-0.400-0.400-0.400-1.100-0.100-1.600c0.200-0.400 0.600-0.600 0.900-0.600z" fill="#fff"/></svg>
<span class="t" style="left:241.37px;top:289.00px;font-size:8.05px;color:#333;">Z98.82</span>
<span class="t" style="left:300.54px;top:289.00px;font-size:8.05px;color:#2a7bc4;">V43.82</span>
<span class="t" style="left:421.50px;top:289.00px;font-size:8.05px;color:#333;letter-spacing:-0.088px;">07/31/2018</span>
<span class="t" style="left:467.30px;top:289.00px;font-size:8.05px;color:#333;">Act</span>
<span class="t" style="left:479.03px;top:289.00px;font-size:8.05px;color:#333;">...</span>
<span class="t" style="left:512.00px;top:289.00px;font-size:8.05px;color:#333;letter-spacing:-0.088px;">07/31/2018</span>
<span class="t" style="left:612.50px;top:289.00px;font-size:8.05px;color:#333;letter-spacing:-0.088px;">07/31/2018</span>
<svg class="b" style="left:711.00px;top:286.35px;" width="8.00" height="10.50" viewBox="0 0 8 10.500"><path d="M4 0L0 4.300h2.700v6.200h2.600v-6.200h2.700z" fill="#1c4865"/></svg>
<svg class="b" style="left:729.00px;top:285.35px;" width="8.00" height="10.50" viewBox="0 0 8 10.500"><path d="M4 10.500L0 6.200h2.700v-6.200h2.600v6.200h2.700z" fill="#1c4865"/></svg>
<svg class="b" style="left:747.50px;top:289.85px;" width="11.50" height="8.50" viewBox="0 0 11.500 8.500"><path d="M0.300 7.800v-6.600a0.500 0.500 0 0 1 0.500-0.500h2.700l1 1.100h4a0.500 0.500 0 0 1 0.500 0.500v0.900h-6.300a0.800 0.800 0 0 0-0.700 0.500z" fill="#f2a91e"/><path d="M0.600 8.300l2.100-4.300a0.500 0.500 0 0 1 0.500-0.300h8l-2.200 4.300a0.500 0.500 0 0 1-0.500 0.300z" fill="#f2a91e"/></svg>
<svg class="b" style="left:767.00px;top:289.85px;" width="9.00" height="9.00" viewBox="0 0 9 9"><circle cx="4.500" cy="4.500" r="3.700" fill="none" stroke="#e8232c" stroke-width="1.300"/><path d="M3 3l3 3M6 3l-3 3" stroke="#e8232c" stroke-width="1.500"/></svg>
<svg class="b" style="left:167.00px;top:308.20px;" width="7.00" height="6.50" viewBox="0 0 7 6.500"><path d="M0.500 3.200l2 2L6.500 0.800" fill="none" stroke="#dcdcdc" stroke-width="1.300"/></svg>
<span class="t" style="left:182.50px;top:308.00px;font-size:8.05px;color:#2a7bc4;">Re</span>
<span class="t" style="left:192.89px;top:308.00px;font-size:8.05px;color:#2a7bc4;">...</span>
<svg class="b" style="left:208.70px;top:307.70px;" width="9.60" height="9.60" viewBox="0 0 10 10"><circle cx="5" cy="5" r="4.800" fill="#1c4865"/><path d="M2.200 2.200c1-0.600 2.200-0.300 2.600 0.400c0.300 0.700-0.500 1.200-0.300 1.900c0.200 0.700 1.300 0.800 1.200 1.700c-0.100 0.900-1 1.600-1.700 1.500c-0.600-0.100-0.400-1-0.900-1.500c-0.500-0.500-1.300-0.600-1.500-1.400c-0.200-0.800 0.100-1.800 0.600-2.600zM6.500 1.300c0.900 0.300 1.700 0.900 2.200 1.800c-0.600 0.300-1.400 0.200-1.800-0.400c-0.300-0.500-0.500-0.900-0.400-1.400zM8.800 5.800c0.200 0.600-0.200 1.600-0.800 2.200c-0.400-0.400-0.400-1.100-0.100-1.600c0.200-0.400 0.600-0.600 0.900-0.600z" fill="#fff"/></svg>
<span class="t" style="left:241.37px;top:308.00px;font-size:8.05px;color:#333;">F33.42</span>
<span class="t" style="left:300.99px;top:308.00px;font-size:8.05px;color:#2a7bc4;">296.36</span>
<span class="t" style="left:351.39px;top:308.00px;font-size:8.05px;color:#2a7bc4;">46244001</span>
<span class="t" style="left:421.50px;top:308.00px;font-size:8.05px;color:#333;letter-spacing:-0.088px;">04/04/2019</span>
<span class="t" style="left:467.30px;top:308.00px;font-size:8.05px;color:#333;">Act</span>
<span class="t" style="left:479.03px;top:308.00px;font-size:8.05px;color:#333;">...</span>
<span class="t" style="left:512.00px;top:308.00px;font-size:8.05px;color:#333;letter-spacing:-0.088px;">04/04/2019</span>
<span class="t" style="left:612.50px;top:308.00px;font-size:8.05px;color:#333;letter-spacing:-0.088px;">04/04/2019</span>
<svg class="b" style="left:711.00px;top:305.20px;" width="8.00" height="10.50" viewBox="0 0 8 10.500"><path d="M4 0L0 4.300h2.700v6.200h2.600v-6.200h2.700z" fill="#1c4865"/></svg>
<svg class="b" style="left:729.00px;top:304.20px;" width="8.00" height="10.50" viewBox="0 0 8 10.500"><path d="M4 10.500L0 6.200h2.700v-6.200h2.600v6.200h2.700z" fill="#1c4865"/></svg>
<svg class="b" style="left:747.50px;top:308.70px;" width="11.50" height="8.50" viewBox="0 0 11.500 8.500"><path d="M0.300 7.800v-6.600a0.500 0.500 0 0 1 0.500-0.500h2.700l1 1.100h4a0.500 0.500 0 0 1 0.500 0.500v0.900h-6.300a0.800 0.800 0 0 0-0.700 0.500z" fill="#f2a91e"/><path d="M0.600 8.300l2.100-4.300a0.500 0.500 0 0 1 0.500-0.300h8l-2.200 4.300a0.500 0.500 0 0 1-0.500 0.300z" fill="#f2a91e"/></svg>
<svg class="b" style="left:767.00px;top:308.70px;" width="9.00" height="9.00" viewBox="0 0 9 9"><circle cx="4.500" cy="4.500" r="3.700" fill="none" stroke="#e8232c" stroke-width="1.300"/><path d="M3 3l3 3M6 3l-3 3" stroke="#e8232c" stroke-width="1.500"/></svg>
<svg class="b" style="left:167.00px;top:327.05px;" width="7.00" height="6.50" viewBox="0 0 7 6.500"><path d="M0.500 3.200l2 2L6.500 0.800" fill="none" stroke="#dcdcdc" stroke-width="1.300"/></svg>
<span class="t" style="left:182.50px;top:327.00px;font-size:8.05px;color:#2a7bc4;">Re</span>
<span class="t" style="left:192.89px;top:327.00px;font-size:8.05px;color:#2a7bc4;">...</span>
<svg class="b" style="left:208.70px;top:326.55px;" width="9.60" height="9.60" viewBox="0 0 10 10"><circle cx="5" cy="5" r="4.800" fill="#1c4865"/><path d="M2.200 2.200c1-0.600 2.200-0.300 2.600 0.400c0.300 0.700-0.500 1.200-0.300 1.900c0.200 0.700 1.300 0.800 1.200 1.700c-0.100 0.900-1 1.600-1.700 1.500c-0.600-0.100-0.400-1-0.900-1.500c-0.500-0.500-1.300-0.600-1.500-1.400c-0.200-0.800 0.100-1.800 0.600-2.600zM6.500 1.300c0.900 0.300 1.700 0.900 2.200 1.800c-0.600 0.300-1.400 0.200-1.800-0.400c-0.300-0.500-0.500-0.900-0.400-1.400zM8.800 5.800c0.200 0.600-0.200 1.600-0.800 2.200c-0.400-0.400-0.400-1.100-0.100-1.600c0.200-0.400 0.600-0.600 0.900-0.600z" fill="#fff"/></svg>
<span class="t" style="left:244.95px;top:327.00px;font-size:8.05px;color:#333;">I15.0</span>
<span class="t" style="left:300.99px;top:327.00px;font-size:8.05px;color:#2a7bc4;">405.91</span>
<span class="t" style="left:349.15px;top:327.00px;font-size:8.05px;color:#2a7bc4;">123799005</span>
<span class="t" style="left:421.50px;top:327.00px;font-size:8.05px;color:#333;letter-spacing:-0.088px;">06/07/2019</span>
<span class="t" style="left:467.30px;top:327.00px;font-size:8.05px;color:#333;">Act</span>
<span class="t" style="left:479.03px;top:327.00px;font-size:8.05px;color:#333;">...</span>
<span class="t" style="left:512.00px;top:327.00px;font-size:8.05px;color:#333;letter-spacing:-0.088px;">06/07/2019</span>
<span class="t" style="left:612.50px;top:327.00px;font-size:8.05px;color:#333;letter-spacing:-0.088px;">06/07/2019</span>
<svg class="b" style="left:711.00px;top:324.05px;" width="8.00" height="10.50" viewBox="0 0 8 10.500"><path d="M4 0L0 4.300h2.700v6.200h2.600v-6.200h2.700z" fill="#1c4865"/></svg>
<svg class="b" style="left:729.00px;top:323.05px;" width="8.00" height="10.50" viewBox="0 0 8 10.500"><path d="M4 10.500L0 6.200h2.700v-6.200h2.600v6.200h2.700z" fill="#1c4865"/></svg>
<svg class="b" style="left:747.50px;top:327.55px;" width="11.50" height="8.50" viewBox="0 0 11.500 8.500"><path d="M0.300 7.800v-6.600a0.500 0.500 0 0 1 0.500-0.500h2.700l1 1.100h4a0.500 0.500 0 0 1 0.500 0.500v0.900h-6.300a0.800 0.800 0 0 0-0.700 0.500z" fill="#f2a91e"/><path d="M0.600 8.300l2.100-4.300a0.500 0.500 0 0 1 0.500-0.300h8l-2.200 4.300a0.500 0.500 0 0 1-0.500 0.300z" fill="#f2a91e"/></svg>
<svg class="b" style="left:767.00px;top:327.55px;" width="9.00" height="9.00" viewBox="0 0 9 9"><circle cx="4.500" cy="4.500" r="3.700" fill="none" stroke="#e8232c" stroke-width="1.300"/><path d="M3 3l3 3M6 3l-3 3" stroke="#e8232c" stroke-width="1.500"/></svg>
<svg class="b" style="left:167.00px;top:345.90px;" width="7.00" height="6.50" viewBox="0 0 7 6.500"><path d="M0.500 3.200l2 2L6.500 0.800" fill="none" stroke="#dcdcdc" stroke-width="1.300"/></svg>
<span class="t" style="left:182.50px;top:346.00px;font-size:8.05px;color:#2a7bc4;">Mil</span>
<span class="t" style="left:192.88px;top:346.00px;font-size:8.05px;color:#2a7bc4;">...</span>
<svg class="b" style="left:208.70px;top:345.40px;" width="9.60" height="9.60" viewBox="0 0 10 10"><circle cx="5" cy="5" r="4.800" fill="#1c4865"/><path d="M2.200 2.200c1-0.600 2.200-0.300 2.600 0.400c0.300 0.700-0.500 1.200-0.300 1.900c0.200 0.700 1.300 0.800 1.200 1.700c-0.100 0.900-1 1.600-1.700 1.500c-0.600-0.100-0.400-1-0.900-1.500c-0.500-0.500-1.300-0.600-1.500-1.400c-0.200-0.800 0.100-1.800 0.600-2.600zM6.500 1.300c0.900 0.300 1.700 0.900 2.200 1.800c-0.600 0.300-1.400 0.200-1.800-0.400c-0.300-0.500-0.500-0.900-0.400-1.400zM8.800 5.800c0.200 0.600-0.200 1.600-0.800 2.200c-0.400-0.400-0.400-1.100-0.100-1.600c0.200-0.400 0.600-0.600 0.900-0.600z" fill="#fff"/></svg>
<span class="t" style="left:241.82px;top:346.00px;font-size:8.05px;color:#333;">J45.20</span>
<span class="t" style="left:300.99px;top:346.00px;font-size:8.05px;color:#2a7bc4;">493.90</span>
<span class="t" style="left:349.15px;top:346.00px;font-size:8.05px;color:#2a7bc4;">427679007</span>
<span class="t" style="left:421.50px;top:346.00px;font-size:8.05px;color:#333;letter-spacing:-0.088px;">08/01/2019</span>
<span class="t" style="left:467.30px;top:346.00px;font-size:8.05px;color:#333;">Act</span>
<span class="t" style="left:479.03px;top:346.00px;font-size:8.05px;color:#333;">...</span>
<span class="t" style="left:512.00px;top:346.00px;font-size:8.05px;color:#333;letter-spacing:-0.088px;">08/01/2019</span>
<span class="t" style="left:612.50px;top:346.00px;font-size:8.05px;color:#333;letter-spacing:-0.088px;">08/01/2019</span>
<svg class="b" style="left:711.00px;top:342.90px;" width="8.00" height="10.50" viewBox="0 0 8 10.500"><path d="M4 0L0 4.300h2.700v6.200h2.600v-6.200h2.700z" fill="#1c4865"/></svg>
<svg class="b" style="left:729.00px;top:341.90px;" width="8.00" height="10.50" viewBox="0 0 8 10.500"><path d="M4 10.500L0 6.200h2.700v-6.200h2.600v6.200h2.700z" fill="#1c4865"/></svg>
<svg class="b" style="left:747.50px;top:346.40px;" width="11.50" height="8.50" viewBox="0 0 11.500 8.500"><path d="M0.300 7.800v-6.600a0.500 0.500 0 0 1 0.500-0.500h2.700l1 1.100h4a0.500 0.500 0 0 1 0.500 0.500v0.900h-6.300a0.800 0.800 0 0 0-0.700 0.500z" fill="#f2a91e"/><path d="M0.600 8.300l2.100-4.300a0.500 0.500 0 0 1 0.500-0.300h8l-2.200 4.300a0.500 0.500 0 0 1-0.500 0.300z" fill="#f2a91e"/></svg>
<svg class="b" style="left:767.00px;top:346.40px;" width="9.00" height="9.00" viewBox="0 0 9 9"><circle cx="4.500" cy="4.500" r="3.700" fill="none" stroke="#e8232c" stroke-width="1.300"/><path d="M3 3l3 3M6 3l-3 3" stroke="#e8232c" stroke-width="1.500"/></svg>
<svg class="b" style="left:167.00px;top:364.75px;" width="7.00" height="6.50" viewBox="0 0 7 6.500"><path d="M0.500 3.200l2 2L6.500 0.800" fill="none" stroke="#dcdcdc" stroke-width="1.300"/></svg>
<span class="t" style="left:182.50px;top:365.00px;font-size:8.05px;color:#2a7bc4;">Ph</span>
<span class="t" style="left:192.45px;top:365.00px;font-size:8.05px;color:#2a7bc4;">...</span>
<svg class="b" style="left:208.70px;top:364.25px;" width="9.60" height="9.60" viewBox="0 0 10 10"><circle cx="5" cy="5" r="4.800" fill="#1c4865"/><path d="M2.200 2.200c1-0.600 2.200-0.300 2.600 0.400c0.300 0.700-0.500 1.200-0.300 1.900c0.200 0.700 1.300 0.800 1.200 1.700c-0.100 0.900-1 1.600-1.700 1.500c-0.600-0.100-0.400-1-0.900-1.500c-0.500-0.500-1.300-0.600-1.500-1.400c-0.200-0.800 0.100-1.800 0.600-2.600zM6.500 1.300c0.900 0.300 1.700 0.900 2.200 1.800c-0.600 0.300-1.400 0.200-1.800-0.400c-0.300-0.500-0.500-0.900-0.400-1.400zM8.800 5.800c0.200 0.600-0.200 1.600-0.800 2.200c-0.400-0.400-0.400-1.100-0.100-1.600c0.200-0.400 0.600-0.600 0.900-0.600z" fill="#fff"/></svg>
<span class="t" style="left:244.05px;top:365.00px;font-size:8.05px;color:#333;">J02.0</span>
<span class="t" style="left:303.23px;top:365.00px;font-size:8.05px;color:#2a7bc4;">034.0</span>
<span class="t" style="left:351.39px;top:365.00px;font-size:8.05px;color:#2a7bc4;">43878008</span>
<span class="t" style="left:421.50px;top:365.00px;font-size:8.05px;color:#333;letter-spacing:-0.088px;">08/01/2019</span>
<span class="t" style="left:467.30px;top:365.00px;font-size:8.05px;color:#333;">Act</span>
<span class="t" style="left:479.03px;top:365.00px;font-size:8.05px;color:#333;">...</span>
<span class="t" style="left:512.00px;top:365.00px;font-size:8.05px;color:#333;letter-spacing:-0.088px;">08/01/2019</span>
<span class="t" style="left:612.50px;top:365.00px;font-size:8.05px;color:#333;letter-spacing:-0.088px;">08/01/2019</span>
<svg class="b" style="left:711.00px;top:361.75px;" width="8.00" height="10.50" viewBox="0 0 8 10.500"><path d="M4 0L0 4.300h2.700v6.200h2.600v-6.200h2.700z" fill="#1c4865"/></svg>
<svg class="b" style="left:729.00px;top:360.75px;" width="8.00" height="10.50" viewBox="0 0 8 10.500"><path d="M4 10.500L0 6.200h2.700v-6.200h2.600v6.200h2.700z" fill="#1c4865"/></svg>
<svg class="b" style="left:747.50px;top:365.25px;" width="11.50" height="8.50" viewBox="0 0 11.500 8.500"><path d="M0.300 7.800v-6.600a0.500 0.500 0 0 1 0.500-0.500h2.700l1 1.100h4a0.500 0.500 0 0 1 0.500 0.500v0.900h-6.300a0.800 0.800 0 0 0-0.700 0.500z" fill="#f2a91e"/><path d="M0.600 8.300l2.100-4.300a0.500 0.500 0 0 1 0.500-0.300h8l-2.200 4.300a0.500 0.500 0 0 1-0.500 0.300z" fill="#f2a91e"/></svg>
<svg class="b" style="left:767.00px;top:365.25px;" width="9.00" height="9.00" viewBox="0 0 9 9"><circle cx="4.500" cy="4.500" r="3.700" fill="none" stroke="#e8232c" stroke-width="1.300"/><path d="M3 3l3 3M6 3l-3 3" stroke="#e8232c" stroke-width="1.500"/></svg>
<div class="b" style="left:167.00px;top:447.00px;width:22.50px;height:15.50px;background:#f1f1f1;border:1px solid #e2e2e2;border-radius:2px;"></div>
<svg class="b" style="left:174.00px;top:451.50px;" width="8.00" height="6.50" viewBox="0 0 8 6.500"><path d="M0.500 0v6.500" stroke="#6a6a6a" stroke-width="1.300"/><path d="M7.500 0v6.500L2 3.250z" fill="#6a6a6a"/></svg>
<div class="b" style="left:192.00px;top:447.00px;width:21.50px;height:15.50px;background:#f1f1f1;border:1px solid #e2e2e2;border-radius:2px;"></div>
<svg class="b" style="left:200.00px;top:451.50px;" width="5.50" height="6.50" viewBox="0 0 5.500 6.500"><path d="M5.500 0v6.500L0 3.250z" fill="#6a6a6a"/></svg>
<div class="b" style="left:216.00px;top:445.50px;width:21.50px;height:17.00px;background:#fff;border:1px solid #dcdcdc;border-radius:2px;"></div>
<span class="t" style="left:219.50px;top:450.00px;font-size:9.00px;color:#333;">1</span>
<span class="t" style="left:240.50px;top:451.00px;font-size:9.50px;color:#333;font-style:italic;">/</span>
<span class="t" style="left:245.50px;top:454.00px;font-size:9.00px;color:#333;">1</span>
<div class="b" style="left:252.00px;top:447.00px;width:20.50px;height:15.50px;background:#f1f1f1;border:1px solid #e2e2e2;border-radius:2px;"></div>
<svg class="b" style="left:260.00px;top:451.50px;" width="5.50" height="6.50" viewBox="0 0 5.500 6.500"><path d="M0 0v6.500L5.500 3.250z" fill="#6a6a6a"/></svg>
<div class="b" style="left:275.50px;top:447.00px;width:21.00px;height:15.50px;background:#f1f1f1;border:1px solid #e2e2e2;border-radius:2px;"></div>
<svg class="b" style="left:282.00px;top:451.50px;" width="8.00" height="6.50" viewBox="0 0 8 6.500"><path d="M7.500 0v6.500" stroke="#6a6a6a" stroke-width="1.300"/><path d="M0.500 0v6.500L6 3.250z" fill="#6a6a6a"/></svg>
<div class="b" style="left:303.00px;top:445.50px;width:41.50px;height:16.00px;background:#fff;border:1px solid #dcdcdc;border-radius:3px;"></div>
<span class="t" style="left:309.00px;top:450.00px;font-size:9.00px;color:#333;">20</span>
<svg class="b" style="left:337.00px;top:450.00px;" width="4.00" height="7.00" viewBox="0 0 4 7"><path d="M0 2.600L2 0L4 2.600zM0 4.400L2 7L4 4.400z" fill="#222"/></svg>
<span class="t" style="left:347.50px;top:449.00px;font-size:9.40px;color:#333;letter-spacing:-0.206px;">items per page</span>
<span class="t" style="left:713.00px;top:450.00px;font-size:9.40px;color:#333;letter-spacing:-0.011px;">1 - 6 of 6 items</span>
<div class="b" style="left:778.00px;top:332.00px;width:18.00px;height:16.50px;background:#1a7cc0;"></div>
<span class="t" style="left:784.00px;top:335.00px;font-size:11.50px;color:#fff;">?</span>
<div class="b" style="left:778.00px;top:348.00px;width:18.00px;height:33.50px;background:#fff;border:1px solid #1a7cc0;"></div>
<span class="t" style="left:782px;top:354.500px;font-size:10px;color:#111;transform-origin:0 0;transform:translate(8.600px,0) rotate(90deg);">Help</span>
<div class="b" style="left:776.00px;top:385.50px;width:21.50px;height:51.50px;background:#0d71bc;border-radius:10.750px;"></div>
<svg class="b" style="left:781.50px;top:395.50px;" width="11.00" height="11.50" viewBox="0 0 11 11.500"><circle cx="5.500" cy="5.700" r="4.100" fill="none" stroke="#fff" stroke-width="1.500"/><path d="M8 9l2.200 1.600l-0.300-2.800z" fill="#fff"/></svg>
<span class="t" style="left:782px;top:408.500px;font-size:8px;font-weight:700;color:#fff;letter-spacing:0.200px;transform-origin:0 0;transform:translate(6.700px,0) rotate(90deg);">Chat</span>
</body></html>
